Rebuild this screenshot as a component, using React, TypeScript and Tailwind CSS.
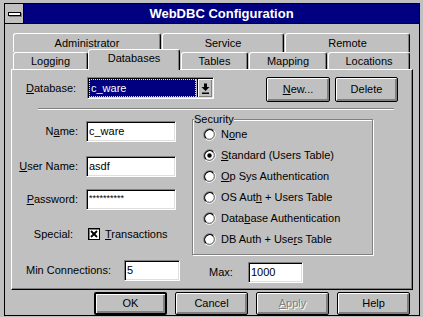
import React from "react";

const sunken =
  "border border-t-[#808080] border-l-[#808080] border-r-white border-b-white shadow-[inset_1px_1px_0_#000,inset_-1px_-1px_0_#dfdfdf]";
const raised =
  "rounded-[2px] border-black shadow-[inset_1px_1px_0_#fff,inset_-1px_-1px_0_#808080,inset_-2px_-2px_0_#808080] flex items-center justify-center";

function U({ children }: { children: React.ReactNode }) {
  return <span className="underline decoration-1 underline-offset-[1px]">{children}</span>;
}

function Tab({ label, w, className = "" }: { label: React.ReactNode; w: string; className?: string }) {
  return (
    <div
      className={`${w} ${className} flex items-center justify-center rounded-t-[3px] border-t border-l border-r border-t-white border-l-white border-r-black shadow-[inset_-1px_0_0_#808080] bg-[#c0c0c0]`}
    >
      {label}
    </div>
  );
}

function Radio({ checked = false }: { checked?: boolean }) {
  return (
    <svg width="13" height="13" viewBox="0 0 13 13" className="shrink-0">
      <circle cx="6.5" cy="6.5" r="5" fill="#fff" />
      <path d="M2.26 10.74 A6 6 0 0 1 10.74 2.26" fill="none" stroke="#808080" />
      <path d="M10.74 2.26 A6 6 0 0 1 2.26 10.74" fill="none" stroke="#fff" />
      <path d="M2.97 10.03 A5 5 0 0 1 10.03 2.97" fill="none" stroke="#000" strokeWidth="1.2" />
      <path d="M10.03 2.97 A5 5 0 0 1 2.97 10.03" fill="none" stroke="#505050" />
      {checked && <circle cx="6.5" cy="6.5" r="2.2" fill="#000" />}
    </svg>
  );
}

function Field({ value, w, className = "" }: { value: React.ReactNode; w: string; className?: string }) {
  return (
    <div className={`${w} h-[21px] bg-white ${sunken} flex items-center pl-[2px] ${className}`}>
      {value}
    </div>
  );
}

const security: Array<{ label: React.ReactNode; checked?: boolean }> = [
  { label: <>N<U>o</U>ne</> },
  { label: <><U>S</U>tandard (Users Table)</>, checked: true },
  { label: <><U>O</U>p Sys Authentication</> },
  { label: <>OS Aut<U>h</U> + Users Table</> },
  { label: <>Data<U>b</U>ase Authentication</> },
  { label: <>DB Auth + Use<U>r</U>s Table</> },
];

export default function App() {
  return (
    <div className="w-[423px] h-[317px] bg-[#c0c0c0] pl-[4px] pt-[3px] overflow-hidden font-['Liberation_Sans',Arial,sans-serif] text-[11px] text-black leading-none select-none">
      <div className="w-[416px] h-[313px] border border-black flex flex-col">
        {/* title bar */}
        <div className="flex h-[20px] border-b border-black shrink-0">
          <div className="w-[19px] border-r border-black flex items-center justify-center">
            <div className="w-[13px] h-[4px] border border-black bg-white shadow-[1px_1px_0_#808080]" />
          </div>
          <div className="flex-1 bg-[#000080] text-white font-bold text-[13px] flex items-center justify-center">
            WebDBC Configuration
          </div>
        </div>

        {/* tabs */}
        <div className="pt-[9px] flex flex-col">
          <div className="flex h-[19px] ml-[8px]">
            <Tab label="Administrator" w="w-[148px]" />
            <Tab label="Service" w="w-[122px]" className="ml-[1px]" />
            <Tab label="Remote" w="w-[125px]" className="ml-[1px]" />
          </div>
          <div className="flex items-start h-[17px] ml-[8px]">
            <Tab label="Logging" w="w-[75px] h-[17px]" />
            <Tab label="Databases" w="w-[92px] h-[21px] -mt-[3px] relative z-10 pb-[3px]" />
            <Tab label="Tables" w="w-[67px] h-[17px]" className="ml-[1px]" />
            <Tab label="Mapping" w="w-[78px] h-[17px]" className="ml-[1px]" />
            <Tab label="Locations" w="w-[82px] h-[17px]" className="ml-[1px]" />
          </div>
        </div>

        {/* panel */}
        <div className="ml-[6px] w-[402px] h-[221px] shrink-0 border-t border-l border-t-white border-l-white border-r border-b border-r-black border-b-black shadow-[inset_-1px_-1px_0_#808080] flex flex-col">
          <div className="flex items-start mt-[7px]">
            <div className="ml-[14px] w-[61px] h-[22px] flex items-center">
              <U>D</U>atabase:
            </div>
            <div className={`w-[127px] h-[22px] ${sunken} bg-[#c0c0c0] flex p-[1px]`}>
              <div className="flex-1 bg-[#000080] border border-dotted border-[#ffff00] text-white flex items-center pl-[1px]">
                c_ware
              </div>
              <div className="w-[15px] ml-[1px] border-l border-black bg-[#c0c0c0] shadow-[inset_1px_1px_0_#fff,inset_-1px_-1px_0_#808080] flex items-center justify-center">
                <svg width="9" height="11" viewBox="0 0 9 11">
                  <rect x="3" y="0.5" width="3" height="3.5" fill="#000" />
                  <polygon points="0.5,4 8.5,4 4.5,8" fill="#000" />
                  <rect x="1" y="9.5" width="7" height="1.5" fill="#000" />
                </svg>
              </div>
            </div>
            <button className={`ml-[52px] w-[64px] h-[25px] border ${raised}`}>
              <U>N</U>ew...
            </button>
            <button className={`ml-[5px] w-[63px] h-[25px] border ${raised}`}>Delete</button>
          </div>

          <div className="mt-[6px] ml-[26px] w-[356px] h-[2px] border-t border-t-[#808080] border-b border-b-white" />

          <div className="flex">
            <div className="flex flex-col w-[164px]">
              <div className="flex mt-[11px]">
                <div className="w-[74px] pr-[8px] h-[21px] flex items-center justify-end">
                  N<U>a</U>me:
                </div>
                <Field value="c_ware" w="w-[90px]" />
              </div>
              <div className="flex mt-[14px]">
                <div className="w-[74px] pr-[8px] h-[21px] flex items-center justify-end">
                  <U>U</U>ser Name:
                </div>
                <Field value="asdf" w="w-[90px]" />
              </div>
              <div className="flex mt-[12px]">
                <div className="w-[74px] pr-[8px] h-[21px] flex items-center justify-end">
                  <U>P</U>assword:
                </div>
                <Field value={<span className="text-[9px] pb-[3px]">**********</span>} w="w-[90px]" />
              </div>
              <div className="flex items-center h-[20px] mt-[14px]">
                <div className="w-[76px] pr-[15px] text-right">Special:</div>
                <div className="w-[12px] h-[12px] bg-white border border-black shadow-[inset_1px_1px_0_#808080]">
                  <svg width="10" height="10" viewBox="0 0 10 10">
                    <path d="M2 2 L8 8 M8 2 L2 8" stroke="#000" strokeWidth="1.8" />
                  </svg>
                </div>
                <div className="ml-[5px]">
                  <U>T</U>ransactions
                </div>
              </div>
            </div>

            <fieldset className="ml-[16px] mt-[4px] w-[181px] h-[141px] border border-[#808080] shadow-[1px_1px_0_#fff,inset_1px_1px_0_#fff] pb-[3px]">
              <legend className="ml-[1px] leading-[10px] bg-[#c0c0c0]">Security</legend>
              {security.map((s, i) => (
                <div key={i} className="flex items-center h-[21px] pl-[10px]">
                  <Radio checked={s.checked} />
                  <span className="ml-[5px]">{s.label}</span>
                </div>
              ))}
            </fieldset>
          </div>

          <div className="flex items-start mt-[5px]">
            <div className="ml-[14px] w-[98px] h-[21px] flex items-center">Min Connections:</div>
            <Field value="5" w="w-[56px]" />
            <div className="flex ml-[29px] mt-[2px]">
              <div className="w-[39px] h-[21px] flex items-center">Max:</div>
              <Field value="1000" w="w-[55px]" />
            </div>
          </div>
        </div>

        {/* dialog buttons */}
        <div className="flex ml-[89px] mt-[2px] gap-[8px]">
          <button className={`w-[73px] h-[23px] border-2 ${raised}`}>OK</button>
          <button className={`w-[73px] h-[23px] border ${raised}`}>Cancel</button>
          <button className={`w-[73px] h-[23px] border ${raised} text-[#808080] [text-shadow:1px_1px_0_#fff]`}>
            <U>A</U>pply
          </button>
          <button className={`w-[73px] h-[23px] border ${raised}`}>Help</button>
        </div>
      </div>
    </div>
  );
}
